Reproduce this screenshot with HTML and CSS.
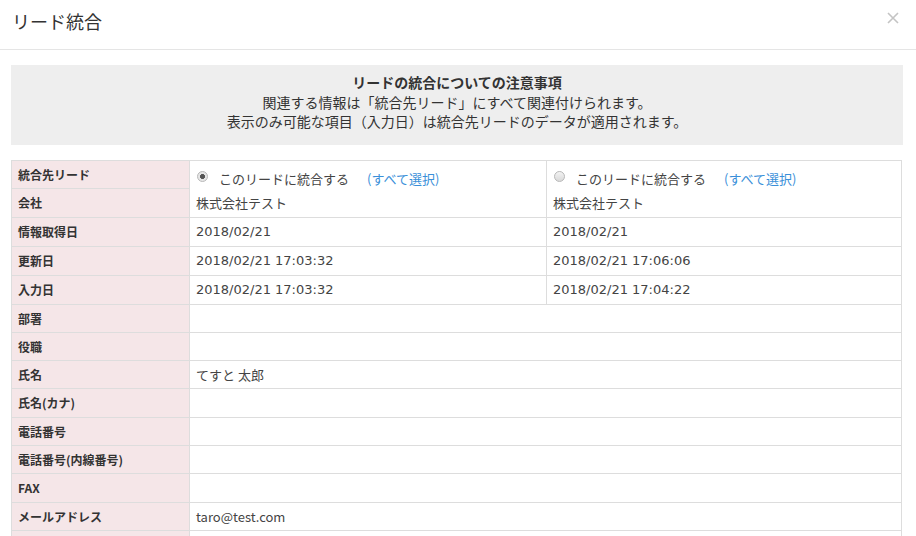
FILE: index.html
```html
<!DOCTYPE html>
<html lang="ja">
  <head>
    <meta charset="UTF-8" />
    <meta name="viewport" content="width=device-width, initial-scale=1.0" />
    <title>リード統合</title>
    <link rel="stylesheet" href="styles.css">
  </head>

  <body>
    <header class="modal-header">
      <h1>リード統合</h1>
      <div class="luk">
        <svg width="12" height="12" viewBox="0 0 12 12">
          <path d="M1 1 L11 11 M11 1 L1 11" stroke="#c4c4c4" stroke-width="1.6" fill="none" />
        </svg>
      </div>
    </header>

    <section class="modal-body">
      <div class="notice">
        <p class="notice-title">リードの統合についての注意事項</p>
        <p>関連する情報は「統合先リード」にすべて関連付けられます。</p>
        <p>表示のみ可能な項目（入力日）は統合先リードのデータが適用されます。</p>
      </div>

      <table class="merge">
        <colgroup>
          <col class="col-label">
          <col class="col-value">
          <col>
        </colgroup>
        <tr>
          <th>統合先リード</th>
          <td rowspan="2" class="lead">
            <div class="pick"><span class="radio checked"></span>このリードに統合する<a href="#">(すべて選択)</a></div>
            <div class="pick-company">株式会社テスト</div>
          </td>
          <td rowspan="2" class="lead">
            <div class="pick"><span class="radio"></span>このリードに統合する<a href="#">(すべて選択)</a></div>
            <div class="pick-company">株式会社テスト</div>
          </td>
        </tr>
        <tr><th>会社</th></tr>
        <tr class="date-row"><th>情報取得日</th><td class="date">2018/02/21</td><td class="date">2018/02/21</td></tr>
        <tr class="date-row"><th>更新日</th><td class="date">2018/02/21 17:03:32</td><td class="date">2018/02/21 17:06:06</td></tr>
        <tr class="date-row"><th>入力日</th><td class="date">2018/02/21 17:03:32</td><td class="date">2018/02/21 17:04:22</td></tr>
        <tr><th>部署</th><td colspan="2"></td></tr>
        <tr><th>役職</th><td colspan="2"></td></tr>
        <tr><th>氏名</th><td colspan="2">てすと 太郎</td></tr>
        <tr><th>氏名(カナ)</th><td colspan="2"></td></tr>
        <tr><th>電話番号</th><td colspan="2"></td></tr>
        <tr><th>電話番号(内線番号)</th><td colspan="2"></td></tr>
        <tr><th>FAX</th><td colspan="2"></td></tr>
        <tr><th>メールアドレス</th><td colspan="2">taro@test.com</td></tr>
        <tr><th></th><td colspan="2"></td></tr>
      </table>
    </section>
  </body>
</html>
```

FILE: styles.css
```css
body {
  margin: 0;
  background-color: #fff;
  font-family: "Noto Sans CJK JP", "Noto Sans", sans-serif;
  color: #333;
}

.modal-header {
  display: flex;
  justify-content: space-between;
  align-items: flex-start;
  height: 50px;
  box-sizing: border-box;
  padding: 9px 17px 0 12px;
  border-bottom: 1px solid #e5e5e5;
}

.modal-header h1 {
  margin: 0;
  font-size: 18px;
  font-weight: normal;
  line-height: 24px;
  color: #333;
}

.luk {
  padding-top: 3px;
  cursor: pointer;
}

.luk svg {
  display: block;
}

.modal-body {
  padding: 15px 13px 0 11px;
}

.notice {
  background-color: #eee;
  padding: 8px 15px 13px;
  text-align: center;
  font-size: 14px;
  line-height: 19.5px;
}

.notice p {
  margin: 0;
}

.notice-title {
  font-weight: bold;
}

.merge {
  width: 891px;
  margin-top: 15px;
  border-collapse: collapse;
  table-layout: fixed;
}

.col-label {
  width: 178px;
}

.col-value {
  width: 357px;
}

.merge th,
.merge td {
  border: 1px solid #ddd;
  padding: 5px 6px;
  line-height: 17.3px;
  vertical-align: top;
  text-align: left;
}

.merge th {
  background-color: #f5e6e8;
  font-size: 12px;
  font-weight: bold;
  color: #333;
}

.merge td {
  font-size: 13px;
  color: #444;
}

.merge .date-row th,
.merge .date-row td {
  line-height: 18px;
}

.merge td.date {
  font-family: "DejaVu Sans", "Noto Sans CJK JP", sans-serif;
}

.merge td.lead {
  padding-top: 6px;
  padding-bottom: 2px;
}

.pick,
.pick-company {
  line-height: 24px;
}

.pick {
  display: flex;
  align-items: center;
}

.pick a {
  color: #3a8fd9;
  text-decoration: none;
  margin-left: 18px;
}

.radio {
  width: 11px;
  height: 11px;
  box-sizing: border-box;
  border: 1px solid #b9b9b9;
  border-radius: 50%;
  background: linear-gradient(#f3f3f3, #d9d9d9);
  margin: 0 11px 0 1px;
  position: relative;
  top: -2px;
}

.radio.checked {
  background: radial-gradient(circle, #555 0, #555 2.2px, #e6e6e6 2.8px);
}
```
